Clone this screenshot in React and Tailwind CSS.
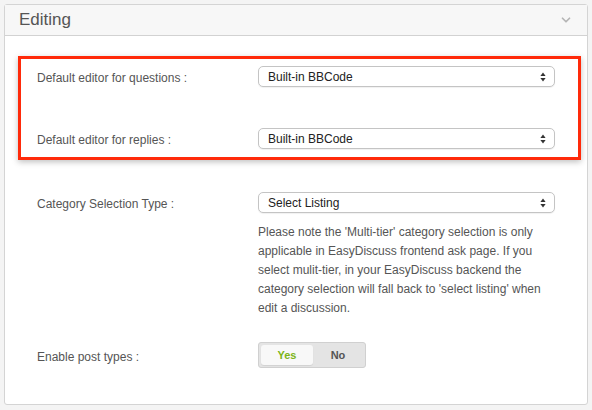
import { ChevronDown } from 'lucide-react'

const font = { fontFamily: '"Liberation Sans", Arial, sans-serif' }

// native-looking select with the little up/down arrow pair
const SelectBox = ({ value }) => (
  <div className="flex h-[21px] w-[297px] items-center justify-between rounded-[5px] border border-[#c4c4c4] bg-white pl-[9px] pr-[8px] text-[12px] text-[#222] shadow-[0_1px_1px_rgba(0,0,0,0.06)]">
    <span>{value}</span>
    <svg width="6" height="10" viewBox="0 0 6 10" className="text-[#333]">
      <path d="M3 0.5 L5.6 4 H0.4 Z" fill="currentColor" />
      <path d="M3 9.5 L5.6 6 H0.4 Z" fill="currentColor" />
    </svg>
  </div>
)

const Row = ({ label, children, className = '' }) => (
  <div className={`flex items-start ${className}`}>
    <div className="w-[221px] shrink-0 pt-[3px] text-[12px] text-[#555]">{label}</div>
    <div>{children}</div>
  </div>
)

export default function App() {
  return (
    <div className="h-[410px] w-[592px] bg-[#f4f4f4] pl-[4px] pr-[4px] pt-[4px]" style={font}>
      <div className="h-[401px] rounded-[3px] border border-[#d4d4d4] bg-white">
        {/* panel header */}
        <div className="flex h-[31px] items-center justify-between border-b border-[#d2d2d2] bg-[#f7f7f7] pl-[14px] pr-[14px]">
          <span className="text-[17px] font-light text-[#555]">Editing</span>
          <ChevronDown className="h-[14px] w-[14px] text-[#b5b5b5]" strokeWidth={3} />
        </div>

        <div className="pl-[13px] pr-[6px] pt-[20px]">
          {/* highlighted editor options */}
          <div className="w-[563px] border-[3px] border-[#ff2a0a] pb-[8px] pl-[16px] pt-[7px] shadow-[0_2px_6px_rgba(0,0,0,0.25)]">
            <Row label="Default editor for questions :">
              <SelectBox value="Built-in BBCode" />
            </Row>
            <Row label="Default editor for replies :" className="mt-[41px]">
              <SelectBox value="Built-in BBCode" />
            </Row>
          </div>

          <div className="pl-[19px]">
            <Row label="Category Selection Type :" className="mt-[32px]">
              <SelectBox value="Select Listing" />
              <p className="mt-[10px] w-[297px] text-[12px] leading-[19px] text-[#555]">
                Please note the 'Multi-tier' category selection is only applicable in EasyDiscuss frontend ask page. If you select mulit-tier, in your EasyDiscuss backend the category selection will fall back to 'select listing' when edit a discussion.
              </p>
            </Row>

            <Row label="Enable post types :" className="mt-[27px]">
              <div className="-mt-[3px] flex h-[26px] w-[108px] items-center rounded-[3px] border border-[#d0d0d0] bg-[#e4e4e4] p-[2px]">
                <div className="flex h-full w-[52px] items-center justify-center rounded-[3px] bg-[#f8f8f8] text-[11px] font-bold text-[#7cb518] shadow-[0_1px_1px_rgba(0,0,0,0.08)]">
                  Yes
                </div>
                <div className="flex h-full flex-1 items-center justify-center text-[11px] font-bold text-[#555]">
                  No
                </div>
              </div>
            </Row>
          </div>
        </div>
      </div>
    </div>
  )
}
